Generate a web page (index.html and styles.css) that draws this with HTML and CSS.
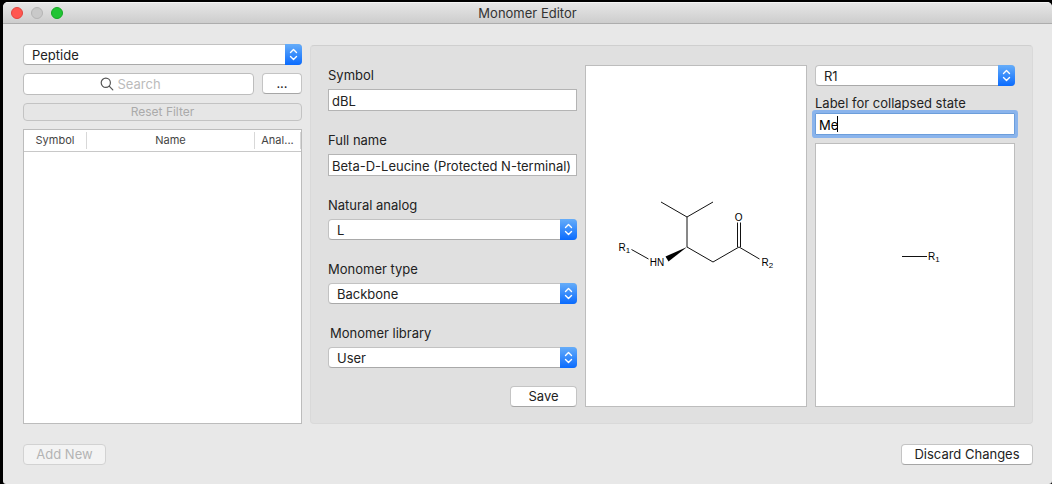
FILE: index.html
```html
<!DOCTYPE html>
<html lang="en">
<head>
<meta charset="utf-8">
<title>Monomer Editor</title>
<link rel="stylesheet" href="styles.css">
</head>
<body>
<svg class="defs" width="0" height="0" aria-hidden="true">
  <defs>
    <linearGradient id="blue" x1="0" y1="0" x2="0" y2="1">
      <stop offset="0" stop-color="#66adf9"/>
      <stop offset="1" stop-color="#0a6bfe"/>
    </linearGradient>
    <symbol id="stepper" viewBox="0 0 17 21">
      <path d="M0 0H13Q17 0 17 4V17Q17 21 13 21H0Z" fill="url(#blue)"/>
      <path d="M5.500 8.500L8.500 5.500L11.500 8.500M5.500 12.500L8.500 15.500L11.500 12.500" fill="none" stroke="#fff" stroke-width="1.4" stroke-linecap="round" stroke-linejoin="round"/>
    </symbol>
  </defs>
</svg>
<div class="window">
  <header class="titlebar">
    <div class="lights">
      <button class="light close" type="button" aria-label="Close"></button>
      <button class="light minimize" type="button" aria-label="Minimize" disabled></button>
      <button class="light zoom" type="button" aria-label="Zoom"></button>
    </div>
    <h1 class="title">Monomer Editor</h1>
  </header>
  <main class="content">
    <div class="columns">
      <section class="browser">
        <div class="select">
          <select aria-label="Polymer type"><option>Peptide</option></select>
          <svg class="stepper"><use href="#stepper"/></svg>
        </div>
        <div class="search-row">
          <div class="search">
            <svg class="search-icon" viewBox="0 0 14 14"><circle cx="5.800" cy="5.800" r="4.600"/><path d="M9.200 9.200L12.800 12.800"/></svg>
            <input class="search-input" type="text" placeholder="Search" aria-label="Search">
          </div>
          <button class="button more" type="button">...</button>
        </div>
        <button class="reset" type="button" disabled>Reset Filter</button>
        <div class="list">
          <table class="table">
            <thead><tr><th class="col-symbol"><span>Symbol</span></th><th><span>Name</span></th><th class="col-analog"><span>Anal...</span></th></tr></thead>
          </table>
        </div>
      </section>
      <section class="panel">
        <form class="form">
          <div class="field">
            <label for="symbol">Symbol</label>
            <input class="text" id="symbol" type="text" value="dBL">
          </div>
          <div class="field">
            <label for="fullname">Full name</label>
            <input class="text" id="fullname" type="text" value="Beta-D-Leucine (Protected N-terminal)">
          </div>
          <div class="field">
            <label for="analog">Natural analog</label>
            <div class="select">
              <select id="analog"><option>L</option></select>
              <svg class="stepper"><use href="#stepper"/></svg>
            </div>
          </div>
          <div class="field">
            <label for="type">Monomer type</label>
            <div class="select">
              <select id="type"><option>Backbone</option></select>
              <svg class="stepper"><use href="#stepper"/></svg>
            </div>
          </div>
          <div class="field last">
            <label class="indented" for="library">Monomer library</label>
            <div class="select">
              <select id="library"><option>User</option></select>
              <svg class="stepper"><use href="#stepper"/></svg>
            </div>
          </div>
          <button class="button save" type="button">Save</button>
        </form>
        <div class="canvas structure">
          <svg class="drawing" viewBox="0 20 220 300" role="img" aria-label="Monomer structure">
            <path class="bond" d="M75 136L101 151L127 136M101 151V181L127 196L153 181L173.500 193M151.500 181V156.500M154.500 181V156.500M45.500 183.500L62.500 193"/>
            <path d="M101 181L79.500 190.500L82.500 195.500Z"/>
            <text x="148.800" y="155">O</text>
            <text x="32.500" y="185">R<tspan class="sub" dy="2">1</tspan></text>
            <text x="63.800" y="200">HN</text>
            <text x="175.500" y="200">R<tspan class="sub" dy="2">2</tspan></text>
          </svg>
        </div>
        <div class="rgroup">
          <div class="select">
            <select aria-label="R-group"><option>R1</option></select>
            <svg class="stepper"><use href="#stepper"/></svg>
          </div>
          <label class="rlabel" for="collapsed">Label for collapsed state</label>
          <div class="focused">
            <input class="text" id="collapsed" type="text" value="Me">
            <span class="caret"></span>
          </div>
          <div class="canvas preview">
            <svg class="drawing" viewBox="0 31 198 200" role="img" aria-label="R-group structure">
              <path class="bond" d="M86 112.500H111"/>
              <text x="112" y="116">R<tspan class="sub" dy="2">1</tspan></text>
            </svg>
          </div>
        </div>
      </section>
    </div>
    <footer class="footer">
      <button class="button add" type="button" disabled>Add New</button>
      <button class="button discard" type="button">Discard Changes</button>
    </footer>
  </main>
</div>
</body>
</html>
```
FILE: styles.css
```css
* { box-sizing: border-box; }
body {
  margin: 0;
  min-height: 100vh;
  display: flex;
  padding: 2px 0 0 3px;
  background: #000;
  color: #222;
  font: 13px/20px Inter, "Liberation Sans", sans-serif;
}
input, select, button { font: inherit; color: inherit; margin: 0; }
.defs { position: absolute; }
.window {
  flex: 1;
  display: flex;
  flex-direction: column;
  background: #e8e8e8;
  border-radius: 5px 5px 3px 3px;
  overflow: hidden;
}
.titlebar {
  display: grid;
  grid-template-columns: 1fr auto 1fr;
  align-items: center;
  height: 22px;
  padding: 0 8px;
  background: linear-gradient(#e6e6e6, #cdcdcd);
  border-top: 1px solid #f4f4f4;
  border-bottom: 1px solid #adadad;
}
.lights { display: flex; gap: 8px; }
.light { width: 12px; height: 12px; padding: 0; border-radius: 50%; border: 1px solid; }
.close { background: #ff5750; border-color: #e2443e; }
.minimize { background: #c9c9c9; border-color: #b4b4b4; }
.zoom { background: #21c434; border-color: #14a823; }
.title { margin: 0; font-size: 13px; font-weight: 400; color: #333; }
.content {
  flex: 1;
  display: flex;
  flex-direction: column;
  gap: 20px;
  padding: 20px 19px 19px 20px;
}
.columns {
  flex: 1;
  display: grid;
  grid-template-columns: minmax(0, 279fr) minmax(0, 723fr);
  gap: 8px;
}
.browser { display: flex; flex-direction: column; gap: 8px; }
.select { position: relative; }
select {
  display: block;
  width: 100%;
  height: 21px;
  padding: 0 24px 0 8px;
  appearance: none;
  background: #fff;
  border: 1px solid #c2c2c2;
  border-bottom-color: #a9a9a9;
  border-radius: 4px;
}
.stepper { position: absolute; right: 0; top: 0; width: 17px; height: 21px; pointer-events: none; }
.search-row { display: flex; gap: 8px; }
.search {
  flex: 1;
  display: flex;
  align-items: center;
  justify-content: center;
  gap: 4px;
  height: 22px;
  padding-right: 12px;
  background: #fff;
  border: 1px solid #bdbdbd;
  border-radius: 4px;
}
.search-icon { width: 14px; height: 14px; fill: none; stroke: #555; stroke-width: 1.2; stroke-linecap: round; }
.search-input { width: 48px; height: 20px; padding: 0; border: 0; outline: 0; background: none; }
.search-input::placeholder { color: #bbb; opacity: 1; }
.button {
  height: 21px;
  padding: 0;
  background: #fff;
  border: 1px solid #c4c4c4;
  border-bottom-color: #a6a6a6;
  border-radius: 4px;
  line-height: 19px;
}
.more { width: 40px; }
.reset {
  height: 18px;
  padding: 0;
  background: #e6e6e6;
  border: 1px solid #c3c3c3;
  border-radius: 4px;
  line-height: 16px;
  font-size: 12px;
  color: #aaa;
}
.list { flex: 1; background: #fff; border: 1px solid #bcbcbc; }
.table { width: 100%; table-layout: fixed; border-collapse: separate; border-spacing: 0; font-size: 11px; }
.table th { height: 22px; padding: 2px 0; font-weight: 400; color: #444; border-bottom: 1px solid #c8c8c8; }
.table span { display: block; line-height: 17px; border-right: 1px solid #d8d8d8; }
.col-symbol { width: 63px; }
.col-analog { width: 46px; }
.panel {
  display: grid;
  grid-template-columns: minmax(0, 249fr) minmax(0, 222fr) minmax(0, 200fr);
  gap: 8px;
  margin-top: 1px;
  padding: 19px 17px 16px;
  background: #e0e0e0;
  border: 1px solid #d9d9d9;
  border-top-color: #cfcfcf;
  border-radius: 4px;
}
.form { display: flex; flex-direction: column; }
.field { margin-bottom: 19px; }
.last { margin-bottom: 18px; }
.field label { display: block; line-height: 21px; margin-bottom: 3px; }
.field .indented { padding-left: 2px; }
.text {
  display: block;
  width: 100%;
  height: 22px;
  padding: 2px 3px 0;
  background: #fff;
  border: 1px solid #b4b4b4;
  border-radius: 0;
  outline: 0;
}
.save { width: 67px; align-self: flex-end; }
.canvas { display: flex; align-items: center; background: #fff; border: 1px solid #bdbdbd; }
.drawing { width: 100%; font: 10px "Liberation Sans", Arial, sans-serif; }
.structure .drawing { height: 300px; }
.preview .drawing { height: 200px; }
.bond { fill: none; stroke: #111; stroke-width: 1; }
.sub { font-size: 8px; }
.rgroup { display: flex; flex-direction: column; }
.rlabel { margin-top: 7px; }
.focused { position: relative; margin-bottom: 8px; }
.focused .text { border-color: #6c9edb; box-shadow: 0 0 0 3px #8ab4ec; border-radius: 1px; color: #000; }
.caret { position: absolute; left: 22px; top: 3px; width: 1px; height: 16px; background: #000; }
.preview { flex: 1; }
.footer { display: flex; justify-content: space-between; }
.add { width: 83px; background: #f3f3f3; border-color: #d2d2d2; color: #b4b4b4; }
.discard { width: 132px; }
```
